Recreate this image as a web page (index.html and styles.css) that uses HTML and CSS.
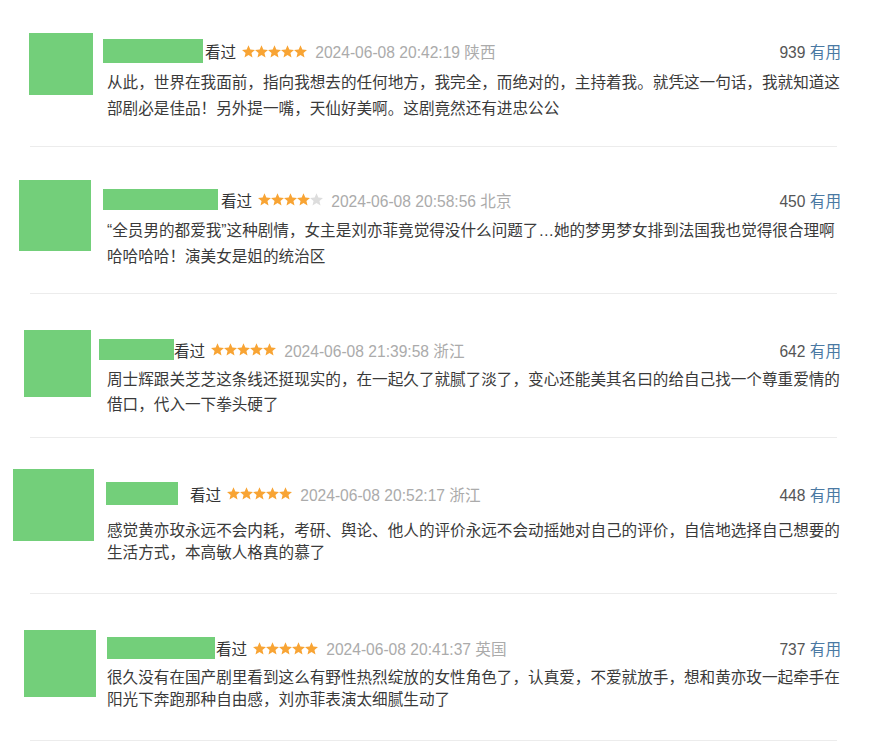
FILE: index.html
```html
<!DOCTYPE html>
<html lang="zh-CN">
<head>
<meta charset="utf-8">
<title>短评</title>
<link rel="stylesheet" href="styles.css">
</head>
<body>
<svg class="defs" width="0" height="0" aria-hidden="true">
  <defs>
    <symbol id="star" viewBox="0 0 13 13">
      <polygon points="6.5,0.2 8.32,4.49 12.97,4.9 9.45,7.96 10.5,12.5 6.5,10.1 2.5,12.5 3.55,7.96 0.03,4.9 4.68,4.49"/>
    </symbol>
  </defs>
</svg>

<div class="list">

  <div class="review r1">
    <div class="avatar"></div>
    <div class="main">
      <div class="head">
        <span class="name"></span>
        <span class="watched">看过</span>
        <svg class="stars" width="65" height="13" viewBox="0 0 65 13">
          <use href="#star" x="0" y="0" width="13" height="13" class="on"/><use href="#star" x="13" y="0" width="13" height="13" class="on"/><use href="#star" x="26" y="0" width="13" height="13" class="on"/><use href="#star" x="39" y="0" width="13" height="13" class="on"/><use href="#star" x="52" y="0" width="13" height="13" class="on"/>
        </svg>
        <span class="time">2024-06-08 20:42:19 陕西</span>
        <span class="votes">939 <span class="useful">有用</span></span>
      </div>
      <p class="text">从此，世界在我面前，指向我想去的任何地方，我完全，而绝对的，主持着我。就凭这一句话，我就知道这部剧必是佳品！另外提一嘴，天仙好美啊。这剧竟然还有进忠公公</p>
    </div>
  </div>
  <div class="sep"></div>

  <div class="review r2">
    <div class="avatar"></div>
    <div class="main">
      <div class="head">
        <span class="name"></span>
        <span class="watched">看过</span>
        <svg class="stars" width="65" height="13" viewBox="0 0 65 13">
          <use href="#star" x="0" y="0" width="13" height="13" class="on"/><use href="#star" x="13" y="0" width="13" height="13" class="on"/><use href="#star" x="26" y="0" width="13" height="13" class="on"/><use href="#star" x="39" y="0" width="13" height="13" class="on"/><use href="#star" x="52" y="0" width="13" height="13" class="off"/>
        </svg>
        <span class="time">2024-06-08 20:58:56 北京</span>
        <span class="votes">450 <span class="useful">有用</span></span>
      </div>
      <p class="text">“全员男的都爱我”这种剧情，女主是刘亦菲竟觉得没什么问题了…她的梦男梦女排到法国我也觉得很合理啊<span class="keep">哈哈哈哈！</span>演美女是姐的统治区</p>
    </div>
  </div>
  <div class="sep"></div>

  <div class="review r3">
    <div class="avatar"></div>
    <div class="main">
      <div class="head">
        <span class="name"></span>
        <span class="watched">看过</span>
        <svg class="stars" width="65" height="13" viewBox="0 0 65 13">
          <use href="#star" x="0" y="0" width="13" height="13" class="on"/><use href="#star" x="13" y="0" width="13" height="13" class="on"/><use href="#star" x="26" y="0" width="13" height="13" class="on"/><use href="#star" x="39" y="0" width="13" height="13" class="on"/><use href="#star" x="52" y="0" width="13" height="13" class="on"/>
        </svg>
        <span class="time">2024-06-08 21:39:58 浙江</span>
        <span class="votes">642 <span class="useful">有用</span></span>
      </div>
      <p class="text">周士辉跟关芝芝这条线还挺现实的，在一起久了就腻了淡了，变心还能美其名曰的给自己找一个尊重爱情的借口，代入一下拳头硬了</p>
    </div>
  </div>
  <div class="sep"></div>

  <div class="review r4">
    <div class="avatar"></div>
    <div class="main">
      <div class="head">
        <span class="name"></span>
        <span class="watched">看过</span>
        <svg class="stars" width="65" height="13" viewBox="0 0 65 13">
          <use href="#star" x="0" y="0" width="13" height="13" class="on"/><use href="#star" x="13" y="0" width="13" height="13" class="on"/><use href="#star" x="26" y="0" width="13" height="13" class="on"/><use href="#star" x="39" y="0" width="13" height="13" class="on"/><use href="#star" x="52" y="0" width="13" height="13" class="on"/>
        </svg>
        <span class="time">2024-06-08 20:52:17 浙江</span>
        <span class="votes">448 <span class="useful">有用</span></span>
      </div>
      <p class="text">感觉黄亦玫永远不会内耗，考研、舆论、他人的评价永远不会动摇她对自己的评价，自信地选择自己想要的生活方式，本高敏人格真的慕了</p>
    </div>
  </div>
  <div class="sep"></div>

  <div class="review r5">
    <div class="avatar"></div>
    <div class="main">
      <div class="head">
        <span class="name"></span>
        <span class="watched">看过</span>
        <svg class="stars" width="65" height="13" viewBox="0 0 65 13">
          <use href="#star" x="0" y="0" width="13" height="13" class="on"/><use href="#star" x="13" y="0" width="13" height="13" class="on"/><use href="#star" x="26" y="0" width="13" height="13" class="on"/><use href="#star" x="39" y="0" width="13" height="13" class="on"/><use href="#star" x="52" y="0" width="13" height="13" class="on"/>
        </svg>
        <span class="time">2024-06-08 20:41:37 英国</span>
        <span class="votes">737 <span class="useful">有用</span></span>
      </div>
      <p class="text">很久没有在国产剧里看到这么有野性热烈绽放的女性角色了，认真爱，不爱就放手，想和黄亦玫一起牵手在阳光下奔跑那种自由感，刘亦菲表演太细腻生动了</p>
    </div>
  </div>
  <div class="sep"></div>

</div>
</body>
</html>
```

FILE: styles.css
```css
* {
  box-sizing: border-box;
}

html, body {
  margin: 0;
  padding: 0;
  background: #ffffff;
}

body {
  font-family: "Liberation Sans", "Noto Sans CJK SC", sans-serif;
  font-size: 15.6px;
  color: #3a3a3a;
  width: 882px;
  height: 742px;
  overflow: hidden;
}

.defs {
  position: absolute;
  width: 0;
  height: 0;
}

.list {
  display: flex;
  flex-direction: column;
}

.review {
  display: flex;
  align-items: flex-start;
  padding-right: 41px;
  padding-bottom: var(--pb);
}

.avatar {
  flex: none;
  width: var(--aw);
  height: var(--ah);
  margin-left: var(--ax);
  margin-top: var(--ay);
  background: #73cf7a;
}

.main {
  flex: 1;
  min-width: 0;
  margin-left: var(--gap);
  margin-top: var(--my);
}

.head {
  display: flex;
  align-items: center;
  height: var(--nh);
  white-space: nowrap;
}

.name {
  flex: none;
  width: var(--nw);
  height: var(--nh);
  background: #73cf7a;
}

.watched {
  margin-left: var(--wg);
  color: #333333;
}

.stars {
  flex: none;
  display: block;
  margin-left: 6px;
}

.stars .on {
  fill: #f8a434;
}

.stars .off {
  fill: #dddddd;
}

.time {
  margin-left: 8px;
  color: #ababab;
}

.votes {
  margin-left: auto;
  color: #555555;
}

.useful {
  color: #4a79a3;
}

.text {
  margin: var(--tg) 0 0 var(--tx);
  line-height: var(--lh);
  color: #3a3a3a;
}

.keep {
  white-space: nowrap;
}

.sep {
  height: 1px;
  margin: 0 45px 0 30px;
  background: #ececec;
}

.r1 {
  --ax: 29px; --ay: 33px; --aw: 64px; --ah: 62px;
  --gap: 10px; --my: 39px; --nw: 100px; --nh: 24px; --wg: 2px;
  --tg: 7px; --tx: 4px; --lh: 26px; --pb: 24px;
}

.r2 {
  --ax: 19px; --ay: 33px; --aw: 72px; --ah: 71px;
  --gap: 12px; --my: 42px; --nw: 115px; --nh: 21px; --wg: 3px;
  --tg: 8px; --tx: 4px; --lh: 26px; --pb: 23px;
}

.r3 {
  --ax: 24px; --ay: 36px; --aw: 67px; --ah: 67px;
  --gap: 8px; --my: 45px; --nw: 75px; --nh: 21px; --wg: 0px;
  --tg: 7px; --tx: 8px; --lh: 25px; --pb: 20px;
}

.r4 {
  --ax: 13px; --ay: 31px; --aw: 81px; --ah: 72px;
  --gap: 12px; --my: 44px; --nw: 72px; --nh: 23px; --wg: 12px;
  --tg: 15px; --tx: 1px; --lh: 22px; --pb: 29px;
}

.r5 {
  --ax: 24px; --ay: 36px; --aw: 72px; --ah: 67px;
  --gap: 11px; --my: 43px; --nw: 108px; --nh: 22px; --wg: 1px;
  --tg: 8px; --tx: 0px; --lh: 22px; --pb: 29px;
}
```
